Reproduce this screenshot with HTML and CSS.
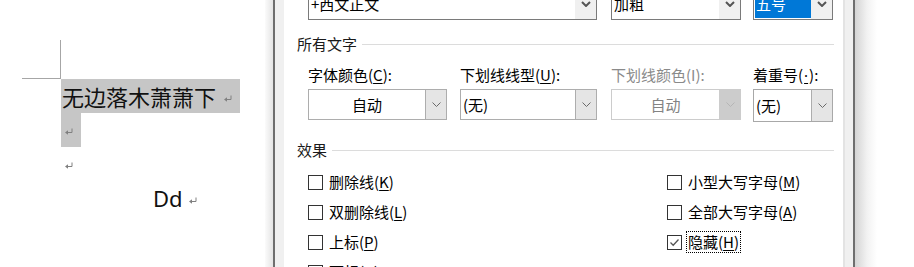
FILE: index.html
```html
<!DOCTYPE html>
<html lang="zh-CN">
<head>
<meta charset="utf-8">
<title>字体</title>
<link rel="stylesheet" href="styles.css">
</head>
<body>
<div class="screen">
  <div class="doc">
    <div class="corner"></div>
    <div class="line">
      <span class="sel sel1"><span class="cjk">无边落木萧萧下</span><svg class="pm" viewBox="0 0 8 7"><path d="M7 0.5V4.5H2" fill="none" stroke="#808080" stroke-width="1"/><path d="M0 4.5L3 2.3V6.7Z" fill="#808080"/></svg></span>
    </div>
    <div class="line">
      <span class="sel sel2"><svg class="pm" viewBox="0 0 8 7"><path d="M7 0.5V4.5H2" fill="none" stroke="#808080" stroke-width="1"/><path d="M0 4.5L3 2.3V6.7Z" fill="#808080"/></svg></span>
    </div>
    <div class="line l3">
      <svg class="pm" viewBox="0 0 8 7"><path d="M7 0.5V4.5H2" fill="none" stroke="#808080" stroke-width="1"/><path d="M0 4.5L3 2.3V6.7Z" fill="#808080"/></svg>
    </div>
    <div class="line l4">
      <span class="latin">Dd</span><svg class="pm" viewBox="0 0 8 7"><path d="M7 0.5V4.5H2" fill="none" stroke="#808080" stroke-width="1"/><path d="M0 4.5L3 2.3V6.7Z" fill="#808080"/></svg>
    </div>
  </div>
  <div class="shadow-l"></div>
  <div class="dialog">
    <div class="panel">
      <div class="grid4 toprow">
        <div class="combo span2">
          <div class="val">+西文正文</div>
          <div class="btn"><svg viewBox="0 0 10 6" class="chev-b"><path d="M1 1L5 5L9 1" fill="none" stroke="#555" stroke-width="2"/></svg></div>
        </div>
        <div class="combo w3">
          <div class="val">加粗</div>
          <div class="btn"><svg viewBox="0 0 10 6" class="chev-b"><path d="M1 1L5 5L9 1" fill="none" stroke="#555" stroke-width="2"/></svg></div>
        </div>
        <div class="combo w4">
          <div class="val selected">五号</div>
          <div class="btn"><svg viewBox="0 0 10 6" class="chev-b"><path d="M1 1L5 5L9 1" fill="none" stroke="#555" stroke-width="2"/></svg></div>
        </div>
      </div>

      <div class="header first"><span>所有文字</span><div class="rule"></div></div>

      <div class="grid4 fields">
        <div class="field">
          <div class="label">字体颜色(<u>C</u>):</div>
          <div class="dd w1">
            <div class="val center">自动</div>
            <div class="btn"><svg viewBox="0 0 9 5" class="chev"><path d="M0.5 0.5L4.5 4.5L8.5 0.5" fill="none" stroke="#6a6a6a" stroke-width="1"/></svg></div>
          </div>
        </div>
        <div class="field">
          <div class="label">下划线线型(<u>U</u>):</div>
          <div class="dd w2">
            <div class="val">(无)</div>
            <div class="btn"><svg viewBox="0 0 9 5" class="chev"><path d="M0.5 0.5L4.5 4.5L8.5 0.5" fill="none" stroke="#6a6a6a" stroke-width="1"/></svg></div>
          </div>
        </div>
        <div class="field">
          <div class="label disabled">下划线颜色(I):</div>
          <div class="dd w3 off">
            <div class="val center">自动</div>
            <div class="btn"><svg viewBox="0 0 9 5" class="chev"><path d="M0.5 0.5L4.5 4.5L8.5 0.5" fill="none" stroke="#b5b5b5" stroke-width="1"/></svg></div>
          </div>
        </div>
        <div class="field">
          <div class="label">着重号(<u class="dot">·</u>):</div>
          <div class="dd w4 tall">
            <div class="val">(无)</div>
            <div class="btn"><svg viewBox="0 0 9 5" class="chev"><path d="M0.5 0.5L4.5 4.5L8.5 0.5" fill="none" stroke="#6a6a6a" stroke-width="1"/></svg></div>
          </div>
        </div>
      </div>

      <div class="header second"><span>效果</span><div class="rule"></div></div>

      <div class="checks">
        <div class="check"><span class="box"></span><span class="ctext">删除线(<u>K</u>)</span></div>
        <div class="check"><span class="box"></span><span class="ctext">小型大写字母(<u>M</u>)</span></div>
        <div class="check"><span class="box"></span><span class="ctext">双删除线(<u>L</u>)</span></div>
        <div class="check"><span class="box"></span><span class="ctext">全部大写字母(<u>A</u>)</span></div>
        <div class="check"><span class="box"></span><span class="ctext">上标(<u>P</u>)</span></div>
        <div class="check"><span class="box checked"><svg viewBox="0 0 13 13"><path d="M2.5 6.5L5.2 9.2L10.5 3.5" fill="none" stroke="#555" stroke-width="1.3"/></svg></span><span class="ctext focus">隐藏(<u>H</u>)</span></div>
        <div class="check"><span class="box"></span><span class="ctext">下标(<u>B</u>)</span></div>
        <div class="check"></div>
      </div>
    </div>
  </div>
  <div class="shadow-r"></div>
  <div class="rest"></div>
</div>
</body>
</html>
```

FILE: styles.css
```css
html, body {
  margin: 0;
  padding: 0;
  background: #fff;
}

.screen {
  display: flex;
  width: 914px;
  height: 267px;
  overflow: hidden;
  font-family: "Noto Sans CJK SC", "Noto Sans", sans-serif;
  color: #000;
}

/* ---------- document ---------- */
.doc {
  width: 265px;
  flex: none;
  background: #fff;
}

.corner {
  margin-left: 22px;
  margin-top: 40px;
  width: 38px;
  height: 38px;
  border-right: 1px solid #a6a6a6;
  border-bottom: 1px solid #a6a6a6;
}

.line {
  height: 34px;
  display: flex;
  align-items: center;
  padding-left: 61px;
}

.sel {
  display: flex;
  align-items: center;
  height: 34px;
  background: #c6c6c6;
}

.sel1 {
  width: 178px;
  padding-left: 1px;
}

.sel2 {
  width: 16px;
  padding-left: 4px;
}

.cjk {
  font-family: "Noto Sans CJK SC", sans-serif;
  font-size: 22px;
  line-height: 34px;
  color: #111;
}

.pm {
  width: 8px;
  height: 7px;
  flex: none;
}

.sel1 .pm {
  margin-left: 8px;
  margin-top: 4px;
}

.sel2 .pm {
  margin-top: 2px;
}

.l3 {
  padding-left: 65px;
}

.l3 .pm {
  margin-top: 3px;
}

.l4 {
  padding-left: 153px;
}

.latin {
  font-family: "Noto Sans", sans-serif;
  font-size: 22px;
  line-height: 34px;
  color: #111;
}

.l4 .pm {
  margin-left: 6px;
  margin-top: 4px;
}

/* ---------- shadows ---------- */
.shadow-l {
  width: 8px;
  flex: none;
  background: linear-gradient(to right, #fbfbfb, #e4e4e4);
}

.shadow-r {
  width: 22px;
  flex: none;
  background: linear-gradient(to right, #d4d4d4, #f2f2f2 55%, #ffffff);
}

.rest {
  flex: 1;
  background: #fff;
}

/* ---------- dialog ---------- */
.dialog {
  width: 582px;
  flex: none;
  box-sizing: border-box;
  border-left: 2px solid #6e6e6e;
  border-right: 2px solid #6e6e6e;
  background: #f0f0f0;
  padding: 0 8px 0 9px;
}

.panel {
  display: flow-root;
  height: 100%;
  box-sizing: border-box;
  background: #fff;
  border-right: 2px solid #e3e3e3;
  padding: 0 9px 0 13px;
  font-size: 15px;
  line-height: 20px;
}

.grid4 {
  display: grid;
  grid-template-columns: 152px 151px 142px 80px;
  margin-left: 11px;
}

.toprow {
  margin-top: -12px;
}

.combo {
  display: flex;
  height: 32px;
  box-sizing: border-box;
  border: 1px solid #7a7a7a;
  background: #fff;
}

.span2 {
  grid-column: span 2;
  width: 289px;
}

.w1 { width: 139px; }
.w2 { width: 137px; }
.w3 { width: 130px; }
.w4 { width: 80px; }

.combo .val {
  flex: 1;
  display: flex;
  align-items: center;
  padding-left: 2px;
}

.combo .val.selected {
  margin: 1px 0 1px 1px;
  padding-left: 1px;
  background: #0078d7;
  color: #fff;
}

.combo .btn {
  width: 21px;
  flex: none;
  display: flex;
  align-items: center;
  justify-content: center;
  background: #f0f0f0;
}

.chev-b {
  width: 10px;
  height: 6px;
}

.header {
  display: flex;
  align-items: center;
  height: 20px;
  color: #1a1a1a;
}

.header.first {
  margin-top: 14px;
}

.header.second {
  margin-top: 18px;
}

.rule {
  flex: 1;
  height: 1px;
  background: #dcdcdc;
  margin-left: 5px;
}

.fields {
  margin-top: 11px;
}

.label {
  height: 20px;
  margin-bottom: 4px;
  white-space: nowrap;
}

.label.disabled {
  color: #8a8a8a;
}

u {
  text-decoration-thickness: 1px;
  text-underline-offset: 2px;
}

u.dot {
  font-family: "Noto Sans", sans-serif;
  padding: 0 1px;
}

.dd {
  display: flex;
  height: 31px;
  box-sizing: border-box;
  border: 1px solid #adadad;
  background: #fff;
}

.dd.tall {
  height: 33px;
  border-color: #a8a8a8;
}

.dd .val {
  flex: 1;
  display: flex;
  align-items: center;
  padding-left: 2px;
}

.dd .val.center {
  justify-content: center;
  padding-left: 0;
}

.dd .btn {
  width: 20px;
  flex: none;
  display: flex;
  align-items: center;
  justify-content: center;
  background: #e5e5e5;
  border-left: 1px solid #adadad;
}

.dd.off {
  border-color: #cccccc;
}

.dd.off .val {
  color: #838383;
}

.dd.off .btn {
  background: #cccccc;
  border-left-color: #cccccc;
}

.chev {
  width: 9px;
  height: 5px;
}

.checks {
  display: grid;
  grid-template-columns: 359px 1fr;
  grid-auto-rows: 30px;
  margin-top: 7px;
  margin-left: 11px;
}

.check {
  display: flex;
  align-items: center;
}

.box {
  width: 15px;
  height: 15px;
  box-sizing: border-box;
  border: 1px solid #333;
  background: #fff;
  flex: none;
  display: flex;
  align-items: center;
  justify-content: center;
}

.box svg {
  width: 13px;
  height: 13px;
}

.ctext {
  margin-left: 6px;
  white-space: nowrap;
}

.ctext.focus {
  margin-left: 4px;
  padding: 0 1px;
  border: 1px dotted #000;
}
```
